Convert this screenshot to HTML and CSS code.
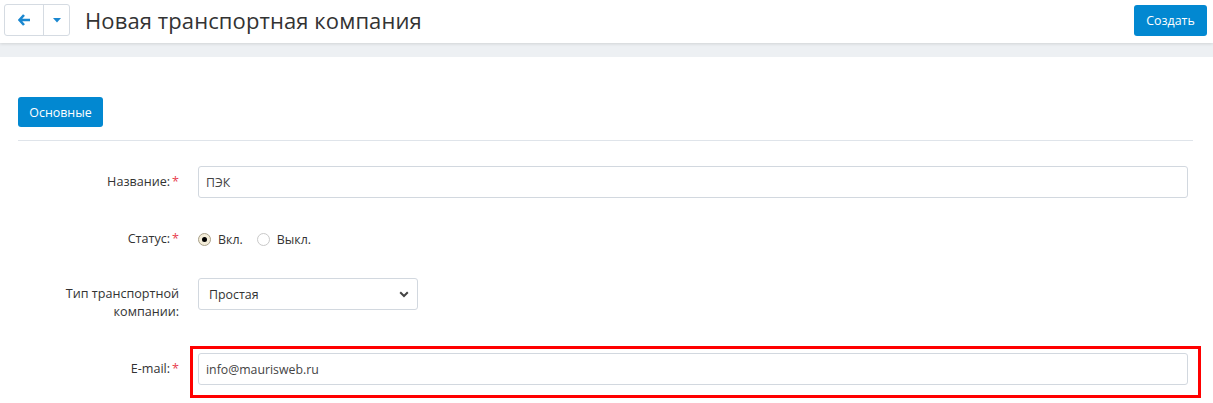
FILE: index.html
```html
<!DOCTYPE html>
<html lang="ru">
<head>
<meta charset="utf-8">
<title>Новая транспортная компания</title>
<link rel="stylesheet" href="styles.css">
</head>
<body>
<header class="topbar">
  <div class="btn-group">
    <button class="btn-back" type="button" aria-label="Назад">
      <svg width="13" height="12" viewBox="0 0 13 12"><path d="M6 1 L1.5 6 L6 11 M1.8 6 H12" fill="none" stroke="#1a87d0" stroke-width="2.6" stroke-linejoin="miter"/></svg>
    </button>
    <button class="btn-caret" type="button" aria-label="Меню">
      <svg width="8" height="5" viewBox="0 0 8 5"><path d="M0 0 H8 L4 4.5 Z" fill="#1a87d0"/></svg>
    </button>
  </div>
  <h1 class="title">Новая транспортная компания</h1>
  <button class="btn-primary btn-create" type="button">Создать</button>
</header>
<div class="band"></div>
<main class="content">
  <div class="tabs">
    <button class="btn-primary btn-tab" type="button">Основные</button>
  </div>
  <form class="form">
    <div class="row row-name">
      <label class="label">Название:<span class="req">*</span></label>
      <div class="field"><input class="input" type="text" value="ПЭК"></div>
    </div>
    <div class="row row-status">
      <label class="label">Статус:<span class="req">*</span></label>
      <div class="field radios">
        <label class="radio"><span class="dot checked"></span>Вкл.</label>
        <label class="radio"><span class="dot"></span>Выкл.</label>
      </div>
    </div>
    <div class="row row-type">
      <label class="label label-multi">Тип транспортной компании:</label>
      <div class="field">
        <div class="select">
          <span>Простая</span>
          <svg width="10" height="7" viewBox="0 0 10 7"><path d="M1.2 1.3 L5 5 L8.8 1.3" fill="none" stroke="#444" stroke-width="2"/></svg>
        </div>
      </div>
    </div>
    <div class="row row-email">
      <label class="label">E-mail:<span class="req">*</span></label>
      <div class="field highlight"><input class="input" type="text" value="info@maurisweb.ru"></div>
    </div>
  </form>
</main>
</body>
</html>
```
FILE: styles.css
```css
* { box-sizing: border-box; }
html, body { margin: 0; padding: 0; background: #fff; }
body {
  font-family: "Open Sans", "Noto Sans", sans-serif;
  color: #333;
  font-size: 13px;
  width: 1213px;
  height: 403px;
  overflow: hidden;
}
button { font-family: inherit; }
.topbar {
  height: 43px;
  display: flex;
  align-items: flex-start;
  padding: 4px 6px 0 4px;
  background: #fff;
  box-shadow: 0 1px 3px rgba(0,0,0,0.12);
  position: relative;
  z-index: 2;
}
.btn-group {
  display: flex;
  height: 32px;
  border: 1px solid #d5dbe2;
  border-radius: 3px;
  background: #fff;
}
.btn-back, .btn-caret {
  border: 0;
  background: transparent;
  padding: 0;
  display: flex;
  align-items: center;
  justify-content: center;
  height: 30px;
}
.btn-back { width: 39px; border-right: 1px solid #d5dbe2; }
.btn-caret { width: 25px; }
.title {
  margin: 0 0 0 15px;
  font-weight: 400;
  font-size: 22px;
  line-height: 32px;
  color: #333;
  flex: 1;
  letter-spacing: 0.1px;
}
.btn-primary {
  background: #0288d1;
  color: #fff;
  border: 0;
  border-radius: 3px;
  font-size: 12.4px;
  cursor: pointer;
}
.btn-create {
  margin-top: 1px;
  width: 73px;
  height: 31px;
  padding: 0;
}
.band {
  height: 14px;
  background: #edf0f3;
}
.content {
  padding: 40px 20px 0 18px;
}
.tabs {
  padding-bottom: 13px;
  border-bottom: 1px solid #dfe4ea;
}
.btn-tab {
  width: 85px;
  height: 30px;
  padding: 0;
}
.form { padding-top: 25px; }
.row {
  display: flex;
  align-items: flex-start;
}
.label {
  width: 180px;
  flex: none;
  text-align: right;
  padding-right: 19px;
  line-height: 18px;
  padding-top: 7px;
  color: #333;
  font-size: 12.6px;
}
.req { color: #e8414f; margin-left: 2px; }
.field { flex: 1; }
.input {
  width: 990px;
  height: 32px;
  border: 1px solid #d2d8df;
  border-radius: 3px;
  padding: 0 7px;
  font-family: inherit;
  font-size: 12.3px;
  color: #444;
  background: #fff;
  outline: none;
}
.row-name { height: 32px; }
.row-status { margin-top: 25px; height: 32px; }
.radios {
  display: flex;
  align-items: center;
  height: 32px;
  gap: 14px;
  font-size: 12.4px;
}
.radio {
  display: flex;
  align-items: center;
  color: #333;
}
.dot {
  width: 13px;
  height: 13px;
  border-radius: 50%;
  border: 1px solid #c9c9c9;
  background: #fff;
  margin-right: 7px;
  position: relative;
}
.dot.checked {
  border-color: #a8a08a;
  background: #f3ecd8;
}
.dot.checked::after {
  content: "";
  position: absolute;
  left: 3px; top: 3px;
  width: 5px; height: 5px;
  border-radius: 50%;
  background: #000;
}
.row-type { margin-top: 23px; }
.label-multi { padding-left: 36px; }
.select {
  width: 220px;
  height: 32px;
  border: 1px solid #d2d8df;
  border-radius: 3px;
  display: flex;
  align-items: center;
  justify-content: space-between;
  padding: 0 8px 0 10px;
  color: #333;
  font-size: 12.4px;
}
.row-email { margin-top: 32px; }
.highlight { position: relative; }
.highlight::after {
  content: "";
  position: absolute;
  left: -8px; top: -7px;
  width: 1005px; height: 46px;
  border: 3px solid #ff0000;
  pointer-events: none;
}
```
